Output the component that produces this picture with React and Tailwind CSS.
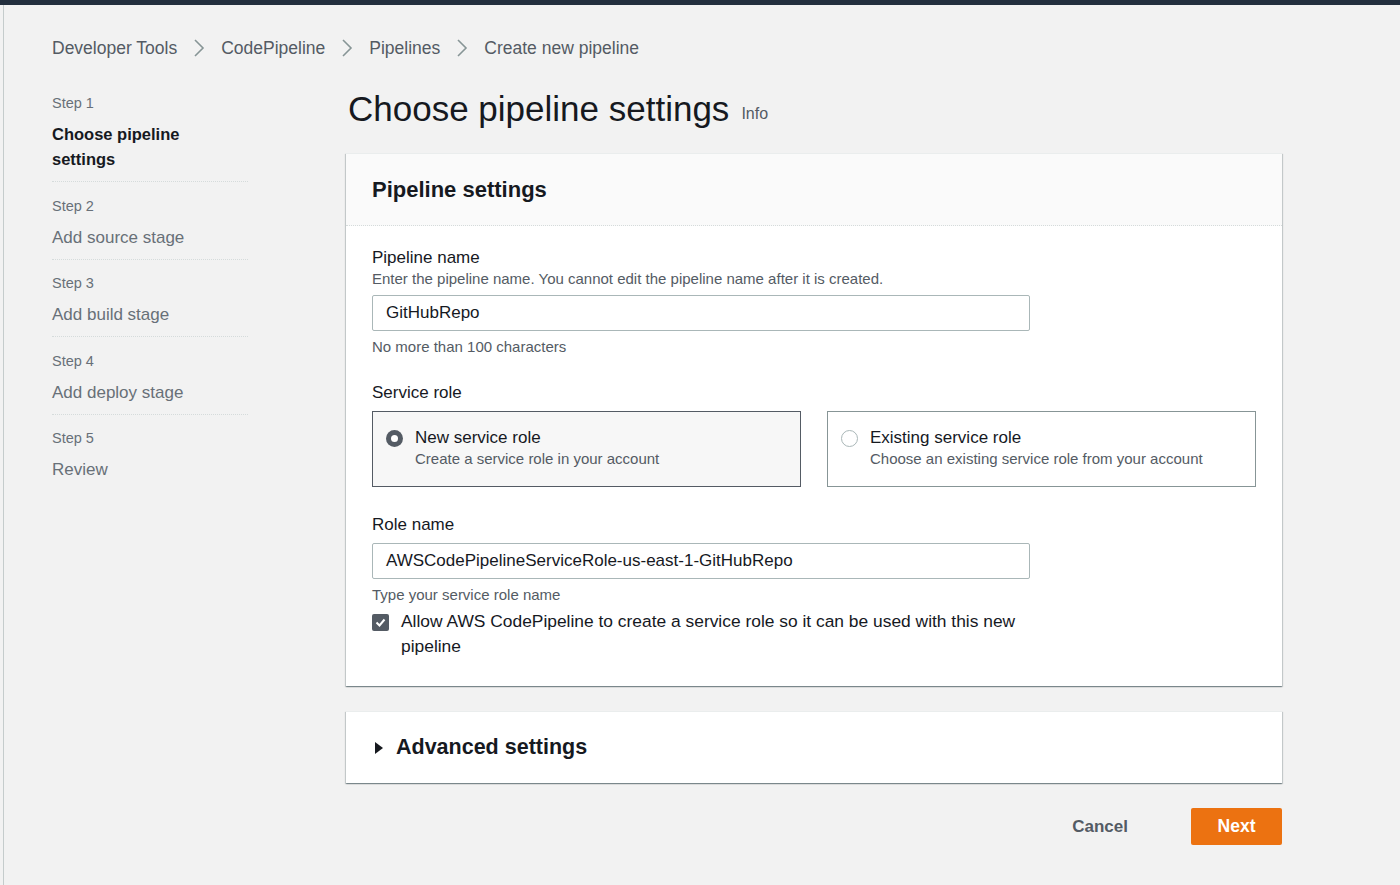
import React from 'react';

const steps = [
  { n: 1, label: 'Choose pipeline settings', active: true },
  { n: 2, label: 'Add source stage' },
  { n: 3, label: 'Add build stage' },
  { n: 4, label: 'Add deploy stage' },
  { n: 5, label: 'Review' },
];

const crumbs = ['Developer Tools', 'CodePipeline', 'Pipelines', 'Create new pipeline'];

const Chevron = () => (
  <svg width="12" height="18" viewBox="0 0 12 18" fill="none" className="mx-[16px]">
    <path d="M2 1l8 8-8 8" stroke="#879596" strokeWidth="1.6" />
  </svg>
);

const cardShadow =
  'shadow-[0_1px_1px_0_rgba(0,28,36,0.3),1px_1px_1px_0_rgba(0,28,36,0.15),-1px_1px_1px_0_rgba(0,28,36,0.15)]';

export default function App() {
  return (
    <div className="min-h-screen bg-[#f2f2f2] font-['Liberation_Sans',Arial,sans-serif] text-[#16191f]">
      {/* top dark strip */}
      <div className="h-[5px] bg-[#232f3e]" />

      <div className="flex min-h-[880px] border-l-[1px] border-[#c5cccc] ml-[3px]">
        <div className="flex-1 pl-[48px]">
          {/* Breadcrumb */}
          <nav className="flex items-center h-[32px] mt-[27px] text-[17.5px] text-[#545b64]">
            {crumbs.map((c, i) => (
              <React.Fragment key={c}>
                {i > 0 && <Chevron />}
                <span>{c}</span>
              </React.Fragment>
            ))}
          </nav>

          <div className="flex mt-[22px]">
            {/* Sidebar */}
            <aside className="w-[196px] shrink-0 mt-[7px]">
              {steps.map((s, i) => (
                <div
                  key={s.n}
                  className={`pb-[9px] ${i < steps.length - 1 ? 'border-b border-dotted border-[#d5dbdb] mb-[13.5px]' : ''}`}
                >
                  <div className="text-[14.5px] leading-[20px] text-[#687078]">Step {s.n}</div>
                  {s.active ? (
                    <div className="mt-[9px] text-[16.5px] leading-[25px] font-bold text-[#16191f] w-[150px]">
                      {s.label}
                    </div>
                  ) : (
                    <div className="mt-[9px] text-[17px] leading-[25px] text-[#687078]">{s.label}</div>
                  )}
                </div>
              ))}
            </aside>

            {/* Main */}
            <main className="ml-[98px] w-[936px]">
              <div className="flex items-end h-[44px] -mt-[1px] pl-[2px]">
                <h1 className="text-[35px] leading-[40px] font-normal text-[#16191f]">Choose pipeline settings</h1>
                <span className="ml-[12px] mb-[3px] text-[16px] text-[#545b64]">Info</span>
              </div>

              {/* Pipeline settings card */}
              <section className={`mt-[24px] bg-white border-t border-[#eaeded] ${cardShadow}`}>
                <header className="h-[72px] flex items-center px-[26px] bg-[#fafafa] border-b border-dotted border-[#d5dbdb]">
                  <h2 className="text-[22px] font-bold">Pipeline settings</h2>
                </header>

                <div className="px-[26px] pt-[21px] pb-[27px]">
                  <div className="text-[17px] leading-[22px]">Pipeline name</div>
                  <div className="text-[15px] leading-[20px] text-[#545b64]">
                    Enter the pipeline name. You cannot edit the pipeline name after it is created.
                  </div>
                  <div className="mt-[6px] w-[658px] h-[36px] border border-[#aab7b8] rounded-[2px] flex items-center px-[13px] text-[17px]">
                    GitHubRepo
                  </div>
                  <div className="mt-[6px] text-[15px] leading-[20px] text-[#545b64]">No more than 100 characters</div>

                  <div className="mt-[25px] text-[17px] leading-[22px]">Service role</div>
                  <div className="mt-[7px] grid grid-cols-2 gap-[26px]">
                    <div className="h-[76px] bg-[#f7f7f7] border border-[#545b64] flex items-start px-[13px] pt-[15px]">
                      <span className="mt-[3px] w-[17px] h-[17px] rounded-full bg-[#545b64] flex items-center justify-center shrink-0">
                        <span className="w-[7px] h-[7px] rounded-full bg-white" />
                      </span>
                      <div className="ml-[12px]">
                        <div className="text-[17px] leading-[22px]">New service role</div>
                        <div className="text-[15px] leading-[20px] text-[#545b64]">Create a service role in your account</div>
                      </div>
                    </div>
                    <div className="h-[76px] bg-white border border-[#879596] flex items-start px-[13px] pt-[15px]">
                      <span className="mt-[3px] w-[17px] h-[17px] rounded-full border border-[#aab7b8] bg-white shrink-0" />
                      <div className="ml-[12px]">
                        <div className="text-[17px] leading-[22px]">Existing service role</div>
                        <div className="text-[15px] leading-[20px] text-[#545b64]">
                          Choose an existing service role from your account
                        </div>
                      </div>
                    </div>
                  </div>

                  <div className="mt-[27px] text-[17px] leading-[22px]">Role name</div>
                  <div className="mt-[7px] w-[658px] h-[36px] border border-[#aab7b8] rounded-[2px] flex items-center px-[13px] text-[17px]">
                    AWSCodePipelineServiceRole-us-east-1-GitHubRepo
                  </div>
                  <div className="mt-[6px] text-[15px] leading-[20px] text-[#545b64]">Type your service role name</div>

                  <div className="mt-[4px] flex items-start">
                    <span className="mt-[5px] w-[17px] h-[17px] rounded-[2px] bg-[#545b64] flex items-center justify-center shrink-0">
                      <svg width="13" height="13" viewBox="0 0 13 13" fill="none">
                        <path d="M2.5 6.5l3 3 5-6" stroke="white" strokeWidth="2" />
                      </svg>
                    </span>
                    <div className="ml-[12px] w-[640px] text-[17.4px] leading-[25px]">
                      Allow AWS CodePipeline to create a service role so it can be used with this new pipeline
                    </div>
                  </div>
                </div>
              </section>

              {/* Advanced settings */}
              <section className={`mt-[25px] h-[72px] bg-white border-t border-[#eaeded] flex items-center px-[28px] ${cardShadow}`}>
                <svg width="10" height="12" viewBox="0 0 10 12">
                  <path d="M1 0l8 6-8 6z" fill="#16191f" />
                </svg>
                <h2 className="ml-[12px] text-[21.5px] font-bold">Advanced settings</h2>
              </section>

              {/* Actions */}
              <div className="mt-[25px] flex justify-end items-center">
                <button className="h-[37px] px-[20px] text-[17px] font-bold text-[#545b64]">Cancel</button>
                <button className="ml-[43px] h-[37px] w-[91px] rounded-[2px] bg-[#ec7211] text-[17.5px] font-bold text-white">
                  Next
                </button>
              </div>
            </main>
          </div>
        </div>
      </div>
    </div>
  );
}
